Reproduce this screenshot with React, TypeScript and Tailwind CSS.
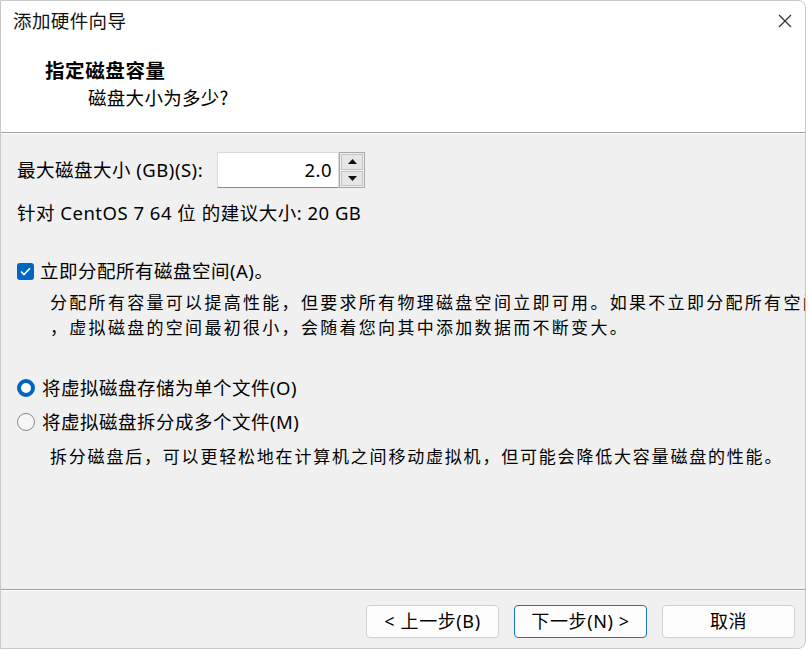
import React from "react";

const font = { fontFamily: "'Noto Sans', 'Noto Sans CJK SC', sans-serif" };
const cjk = { fontFamily: "'Noto Sans CJK SC', sans-serif" };

function Separator() {
  return (
    <div className="flex flex-col shrink-0">
      <div className="h-px bg-[#a0a0a0]" />
      <div className="h-px bg-white" />
    </div>
  );
}

function Spinner() {
  return (
    <div className="flex h-[36px] items-stretch">
      <div className="w-[122px] bg-white border border-[#d9d9d9] border-b-[#8a8a8a] flex items-center justify-end pr-[6px] text-[18.5px] text-black">
        2.0
      </div>
      <div className="w-[26px] flex flex-col border border-[#a8a8a8] bg-[#f0f0f0] p-px gap-px">
        <div className="flex-1 bg-[#e6e6e6] border border-[#c4c4c4] flex items-center justify-center">
          <svg width="9" height="5" viewBox="0 0 9 5">
            <polygon points="4.5,0 9,5 0,5" fill="#111" />
          </svg>
        </div>
        <div className="flex-1 bg-[#e6e6e6] border border-[#c4c4c4] flex items-center justify-center">
          <svg width="9" height="5" viewBox="0 0 9 5">
            <polygon points="0,0 9,0 4.5,5" fill="#111" />
          </svg>
        </div>
      </div>
    </div>
  );
}

function Button({ children, primary }: { children: React.ReactNode; primary?: boolean }) {
  return (
    <div
      className={
        "w-[133px] h-[33px] rounded-[4px] bg-[#fdfdfd] flex items-center justify-center text-[18px] tracking-[0.6px] text-black " +
        (primary ? "border border-[#1a73c9]" : "border border-[#d0d0d0]")
      }
    >
      {children}
    </div>
  );
}

export default function App() {
  return (
    <div className="w-[809px] h-[650px] bg-white overflow-hidden" style={font}>
      <div className="w-[806px] h-[649px] border border-[#c8c8c8] rounded-tr-[8px] rounded-br-[8px] bg-[#f0f0f0] flex flex-col overflow-hidden text-black">
        {/* header */}
        <div className="h-[131px] bg-white shrink-0 flex flex-col">
          <div className="h-[39px] flex items-center justify-between pl-[12px] pr-[13px]">
            <span className="text-[18.5px] tracking-[0.4px] text-[#111]" style={cjk}>添加硬件向导</span>
            <svg width="14" height="14" viewBox="0 0 14 14">
              <path d="M1 1 L13 13 M13 1 L1 13" stroke="#333" strokeWidth="1.3" />
            </svg>
          </div>
          <div className="mt-[18px] pl-[44px] h-[24px] leading-[24px] text-[19.5px] tracking-[0.6px] font-bold" style={cjk}>
            指定磁盘容量
          </div>
          <div className="mt-[3px] pl-[87px] h-[24px] leading-[24px] text-[18.5px] tracking-[0.3px]" style={cjk}>
            磁盘大小为多少?
          </div>
        </div>
        <Separator />

        {/* body */}
        <div className="flex-1 flex flex-col pl-[16px] pt-[18px] text-[18.5px] tracking-[0.5px]">
          <div className="flex items-center h-[36px]">
            <div className="w-[200px] shrink-0 whitespace-nowrap">最大磁盘大小 (GB)(S):</div>
            <Spinner />
          </div>
          <div className="mt-[13px] h-[24px] leading-[24px] whitespace-nowrap">
            针对 CentOS 7 64 位 的建议大小: 20 GB
          </div>

          <div className="mt-[34px] h-[24px] flex items-center">
            <div className="w-[17px] h-[17px] rounded-[3px] bg-[#0067c0] flex items-center justify-center">
              <svg width="11" height="9" viewBox="0 0 11 9">
                <path d="M1 4.5 L4 7.5 L10 1.2" stroke="white" strokeWidth="1.6" fill="none" />
              </svg>
            </div>
            <span className="ml-[6px] whitespace-nowrap">立即分配所有磁盘空间(A)。</span>
          </div>
          <div className="mt-[6px] ml-[33px] text-[17px] tracking-[2.3px] leading-[25px] whitespace-nowrap" style={cjk}>
            <div>分配所有容量可以提高性能，但要求所有物理磁盘空间立即可用。如果不立即分配所有空间</div>
            <div>，虚拟磁盘的空间最初很小，会随着您向其中添加数据而不断变大。</div>
          </div>

          <div className="mt-[37px] h-[24px] flex items-center">
            <div className="w-[18px] h-[18px] rounded-full border-[4px] border-[#0067c0] bg-white" />
            <span className="ml-[7px] whitespace-nowrap">将虚拟磁盘存储为单个文件(O)</span>
          </div>
          <div className="mt-[10px] h-[24px] flex items-center">
            <div className="w-[18px] h-[18px] rounded-full border border-[#8a8a8a] bg-[#f6f6f6]" />
            <span className="ml-[7px] whitespace-nowrap">将虚拟磁盘拆分成多个文件(M)</span>
          </div>
          <div className="mt-[10px] ml-[33px] h-[24px] leading-[24px] text-[17px] tracking-[1.8px] whitespace-nowrap" style={cjk}>
            拆分磁盘后，可以更轻松地在计算机之间移动虚拟机，但可能会降低大容量磁盘的性能。
          </div>
        </div>

        <Separator />
        {/* footer */}
        <div className="h-[57px] shrink-0 flex justify-end items-start pt-[14px] pr-[10px] gap-[15px]">
          <Button>&lt; 上一步(B)</Button>
          <Button primary>下一步(N) &gt;</Button>
          <Button>取消</Button>
        </div>
      </div>
    </div>
  );
}
